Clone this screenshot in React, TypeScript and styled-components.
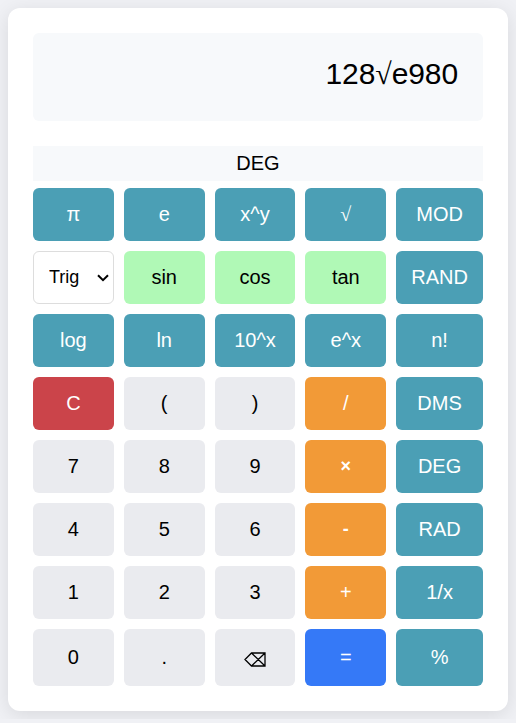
import React from 'react';
import styled, { createGlobalStyle, css } from 'styled-components';

type Kind = 'sci' | 'trig' | 'num' | 'op' | 'clear' | 'equal';

const palette: Record<Kind, { bg: string; fg: string }> = {
  sci: { bg: '#4b9fb5', fg: '#fff' },
  trig: { bg: '#b0f9b6', fg: '#000' },
  num: { bg: '#eaebef', fg: '#000' },
  op: { bg: '#f29a37', fg: '#fff' },
  clear: { bg: '#cb444a', fg: '#fff' },
  equal: { bg: '#3579f7', fg: '#fff' },
};

const GlobalStyle = createGlobalStyle`
  * { box-sizing: border-box; }
  body {
    margin: 0;
    padding: 8px;
    background: #f0f1f5;
    font-family: "Liberation Sans", Arial, sans-serif;
  }
`;

const Calculator = styled.main`
  width: 500px;
  height: 703px;
  padding: 25px;
  background: #fff;
  border-radius: 12px;
  box-shadow: 0 4px 20px rgba(0, 0, 0, 0.1);
`;

const Display = styled.div`
  height: 88px;
  padding: 24px 25px;
  margin-bottom: 25px;
  border-radius: 6px;
  background: #f7f9fb;
  font-size: 30px;
  line-height: 34px;
  letter-spacing: -0.1px;
  text-align: right;
`;

const Radical = styled.span`
  font-family: "Liberation Serif", "Times New Roman", serif;
`;

const Mode = styled.div`
  height: 35px;
  margin-bottom: 7px;
  background: #f7f9fb;
  font-size: 20px;
  line-height: 34px;
  text-align: center;
`;

const Keys = styled.div`
  display: grid;
  grid-template-columns: repeat(4, 80.8px) 86.8px;
  grid-template-rows: repeat(7, 53px) 57px;
  gap: 10px;
`;

const keyShape = css`
  width: 100%;
  height: 100%;
  min-width: 0;
  border-radius: 6px;
  font-family: inherit;
`;

const Key = styled.button<{ $kind: Kind; $heavy?: boolean }>`
  ${keyShape}
  padding: 0;
  border: none;
  font-size: ${(p) => (p.$heavy ? 18 : 20)}px;
  font-weight: ${(p) => (p.$heavy ? 700 : 400)};
  background: ${(p) => palette[p.$kind].bg};
  color: ${(p) => palette[p.$kind].fg};
`;

const SelectBox = styled.div`
  display: grid;
  grid-template-columns: 1fr 17px;
  align-items: center;
`;

const TrigSelect = styled.select`
  ${keyShape}
  grid-area: 1 / 1 / 2 / 3;
  appearance: none;
  padding: 0 0 2px 15px;
  border: 1px solid #ddd;
  background: #fff;
  color: #000;
  font-size: 18px;
`;

const Chevron = styled.svg`
  grid-area: 1 / 2;
  width: 12px;
  height: 8px;
  z-index: 1;
  pointer-events: none;
`;

const EraseIcon = styled.svg`
  display: block;
  margin: 4px auto 0;
`;

const rows: [string, Kind][][] = [
  [['π', 'sci'], ['e', 'sci'], ['x^y', 'sci'], ['√', 'sci'], ['MOD', 'sci']],
  [['Trig', 'trig'], ['sin', 'trig'], ['cos', 'trig'], ['tan', 'trig'], ['RAND', 'sci']],
  [['log', 'sci'], ['ln', 'sci'], ['10^x', 'sci'], ['e^x', 'sci'], ['n!', 'sci']],
  [['C', 'clear'], ['(', 'num'], [')', 'num'], ['/', 'op'], ['DMS', 'sci']],
  [['7', 'num'], ['8', 'num'], ['9', 'num'], ['×', 'op'], ['DEG', 'sci']],
  [['4', 'num'], ['5', 'num'], ['6', 'num'], ['-', 'op'], ['RAD', 'sci']],
  [['1', 'num'], ['2', 'num'], ['3', 'num'], ['+', 'op'], ['1/x', 'sci']],
  [['0', 'num'], ['.', 'num'], ['⌫', 'num'], ['=', 'equal'], ['%', 'sci']],
];

function Label({ text }: { text: string }) {
  if (text === '√') return <Radical>√</Radical>;
  if (text === '⌫') {
    return (
      <EraseIcon width="22" height="15" viewBox="0 0 22 15" fill="none" stroke="#000" strokeWidth="1.3">
        <path d="M7.5 1H21v13H7.5L1 7.5ZM7.5 1 21 14M21 1 7.5 14" />
      </EraseIcon>
    );
  }
  return <>{text}</>;
}

export default function App() {
  return (
    <>
      <GlobalStyle />
      <Calculator>
        <Display>128<Radical>√</Radical>e980</Display>
        <Mode>DEG</Mode>
        <Keys>
          {rows.flat().map(([label, kind]) =>
            label === 'Trig' ? (
              <SelectBox key={label}>
                <TrigSelect aria-label="Trigonometric functions">
                  <option>Trig</option>
                </TrigSelect>
                <Chevron viewBox="0 0 12 8" fill="none" stroke="#000" strokeWidth="2">
                  <path d="m1 1.2 5 5 5-5" />
                </Chevron>
              </SelectBox>
            ) : (
              <Key
                key={label}
                $kind={kind}
                $heavy={label === '×' || label === '-'}
                aria-label={label === '⌫' ? 'Backspace' : undefined}
              >
                <Label text={label} />
              </Key>
            ),
          )}
        </Keys>
      </Calculator>
    </>
  );
}
